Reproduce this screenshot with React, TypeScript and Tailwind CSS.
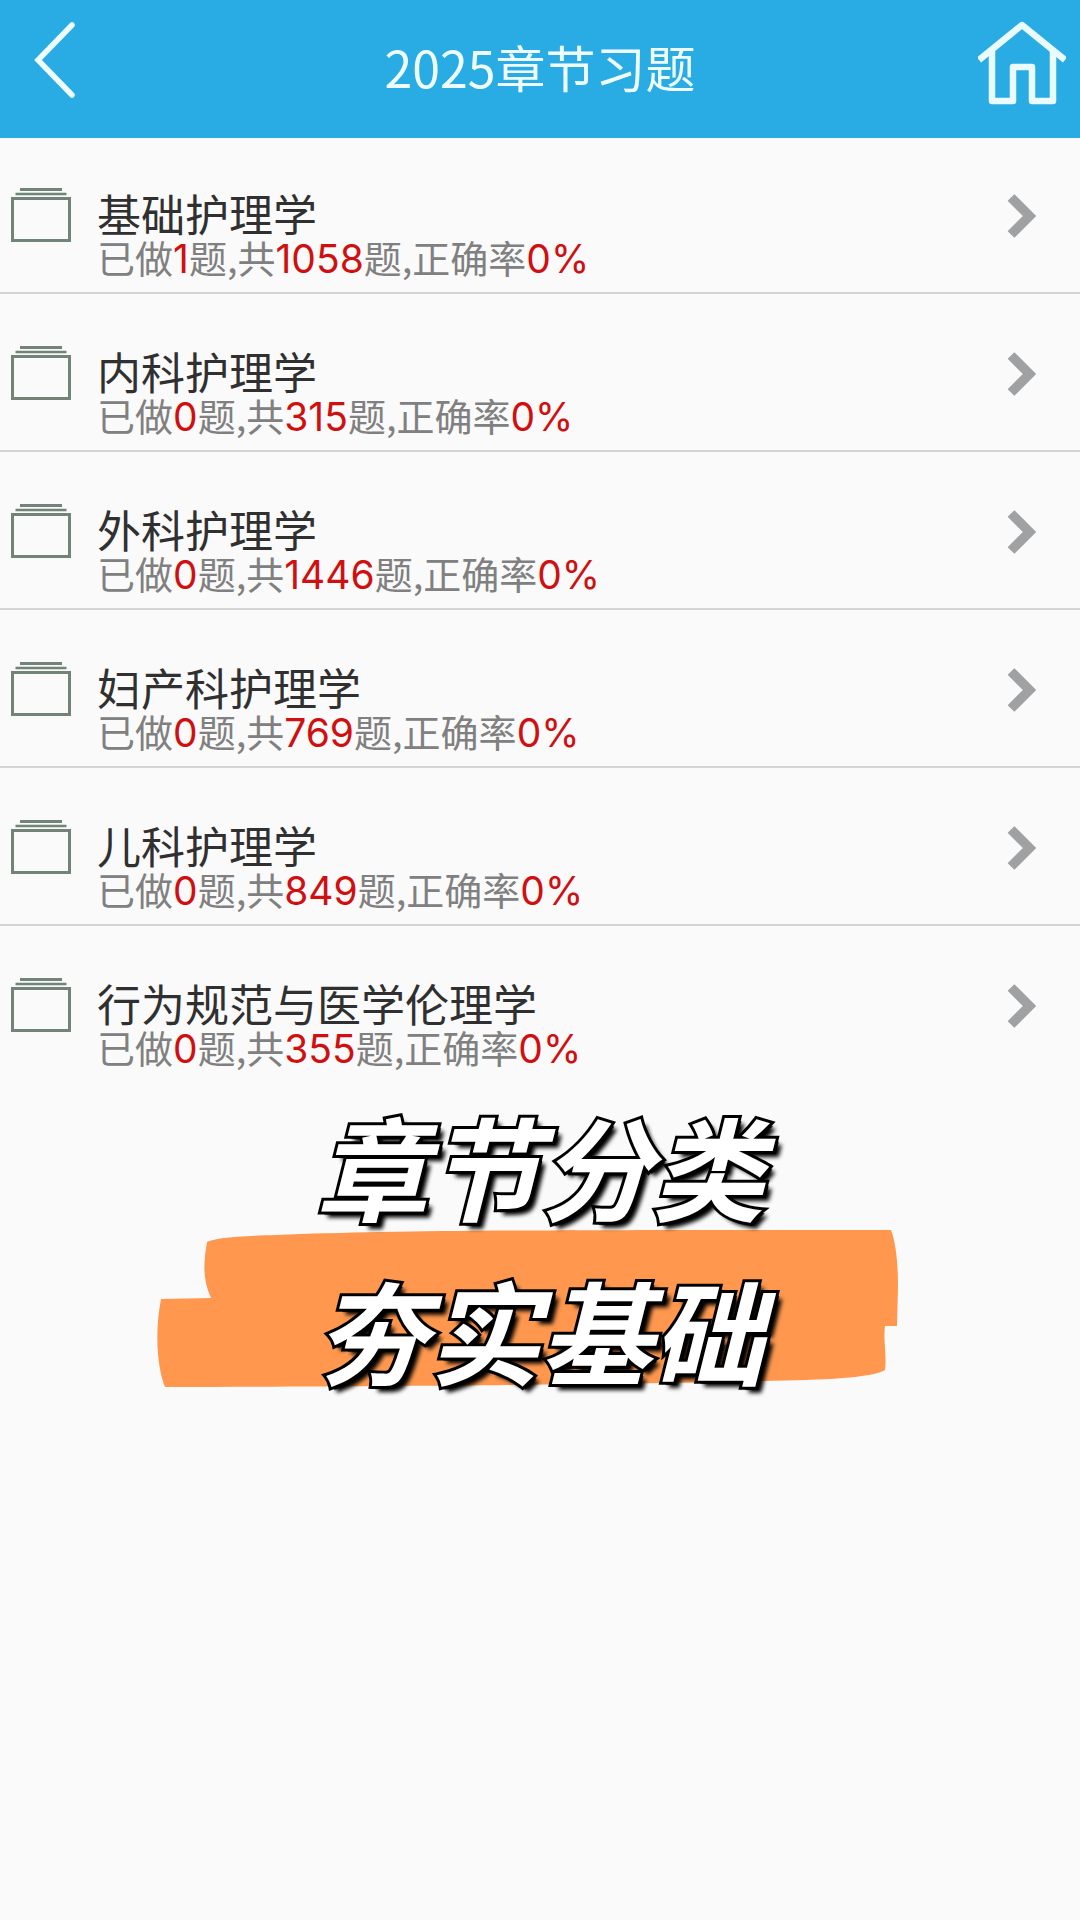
type Chapter = {
  name: string;
  done: number;
  total: number;
  rate: number;
};

const chapters: Chapter[] = [
  { name: "基础护理学", done: 1, total: 1058, rate: 0 },
  { name: "内科护理学", done: 0, total: 315, rate: 0 },
  { name: "外科护理学", done: 0, total: 1446, rate: 0 },
  { name: "妇产科护理学", done: 0, total: 769, rate: 0 },
  { name: "儿科护理学", done: 0, total: 849, rate: 0 },
  { name: "行为规范与医学伦理学", done: 0, total: 355, rate: 0 },
];

function BackIcon() {
  return (
    <svg width="44" height="78" viewBox="0 0 44 78" fill="none" aria-hidden="true">
      <path d="M38 4 4 39l34 35" stroke="#f0fdff" strokeWidth="5.500" strokeLinecap="round" />
    </svg>
  );
}

function HomeIcon() {
  return (
    <svg width="88" height="84" viewBox="0 0 88 84" fill="none" aria-hidden="true">
      <g stroke="#e9fbff" strokeWidth="6.500" strokeLinejoin="round">
        <path d="M1 39 44 4l43 35" />
        <path d="M14 30v50h21V46h19v34h21V30" />
      </g>
    </svg>
  );
}

function FolderIcon() {
  return (
    <svg width="60" height="54" viewBox="0 0 60 54" fill="none" className="shrink-0" aria-hidden="true">
      <g stroke="#728377">
        <path d="M9 1.5h42" strokeWidth="3" />
        <path d="M4.500 6h51" strokeWidth="2.500" />
        <path d="M1.5 10.5h57v42h-57z" strokeWidth="3" />
      </g>
    </svg>
  );
}

function ChevronIcon() {
  return (
    <svg width="30" height="46" viewBox="0 0 30 46" fill="none" aria-hidden="true">
      <path d="M4 4.500 22.500 23 4 41.500" stroke="#a0a1a3" strokeWidth="9.500" />
    </svg>
  );
}

function Num({ children }: { children: React.ReactNode }) {
  return (
    <span className="font-['Inter','Noto_Sans_CJK_SC',sans-serif] text-[39px] text-[#d01010]">
      {children}
    </span>
  );
}

function ChapterRow({ chapter }: { chapter: Chapter }) {
  return (
    <li className="border-b-2 border-[#d3d5d5] pt-[52px] first:pt-[50px] last:border-b-0">
      <a href="#" className="flex items-start pr-[43px] pl-[11px]">
        <FolderIcon />
        <div className="ml-[26px] flex-1 pb-[14px]">
          <h2 className="text-[44px] leading-[50px] text-[#303030]">{chapter.name}</h2>
          <p className="text-[38px] leading-[38px] text-[#808080]">
            已做<Num>{chapter.done}</Num>题,共<Num>{chapter.total}</Num>题,正确率
            <Num>{chapter.rate}%</Num>
          </p>
        </div>
        <span className="pt-[5px]">
          <ChevronIcon />
        </span>
      </a>
    </li>
  );
}

export default function App() {
  return (
    <main className="min-h-screen bg-[#fafafa] font-['Noto_Sans_CJK_SC',sans-serif]">
      {/* Header */}
      <header className="flex h-[138px] items-start justify-between bg-[#29abe4] pr-[14px] pl-[34px]">
        <button type="button" aria-label="返回" className="w-[68px] pt-[21px]">
          <BackIcon />
        </button>
        <h1 className="pt-[30px] text-[50px] leading-[72px] text-[#f0fdff]">2025章节习题</h1>
        <button type="button" aria-label="首页" className="pt-[21px]">
          <HomeIcon />
        </button>
      </header>

      {/* Chapter list */}
      <ul>
        {chapters.map((chapter) => (
          <ChapterRow key={chapter.name} chapter={chapter} />
        ))}
      </ul>

      {/* Slogan over the brush stroke */}
      <section className="flex justify-center pr-6">
        <div className="relative w-[744px] pl-6">
          <svg
            viewBox="0 0 744 158"
            fill="#ff984e"
            className="absolute bottom-[22px] left-0 w-full"
            aria-hidden="true"
          >
            <path d="M51 12C58 8 80 6 120 5C250 0 400 0 735 0C741 16 742 40 742 56L741 96H729C727 110 731 125 729 140C715 148 670 150 605 151C480 154 300 156 9 157C2 140-2 105 5 69L55 68C47 50 47 35 51 12Z" />
          </svg>
          <p className="relative text-center text-[112px] leading-[164px] font-bold text-white italic [-webkit-text-stroke:6px_black] [paint-order:stroke_fill] [text-shadow:3px_3px_1px_black,6px_6px_4px_black]">
            章节分类
            <br />
            夯实基础
          </p>
        </div>
      </section>
    </main>
  );
}
